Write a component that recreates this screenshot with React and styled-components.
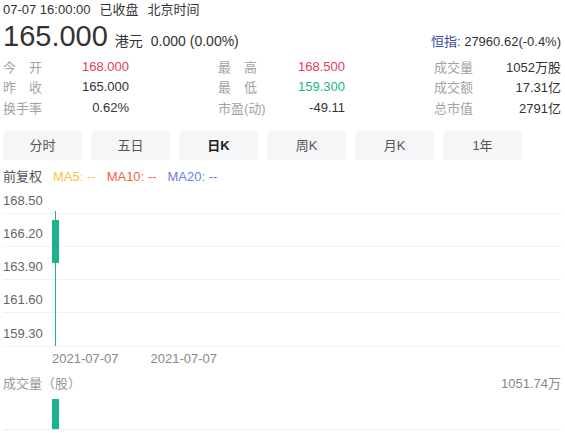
import styled, { createGlobalStyle } from "styled-components";

const GlobalStyle = createGlobalStyle`
  html, body {
    margin: 0;
    padding: 0;
    background: #fff;
  }
  body {
    font-family: "Liberation Sans", "Noto Sans CJK SC", sans-serif;
    color: #333;
  }
`;

const stats = [
  [
    { label: "今开", value: "168.000", tone: "up" },
    { label: "最高", value: "168.500", tone: "up" },
    { label: "成交量", value: "1052万股" },
  ],
  [
    { label: "昨收", value: "165.000" },
    { label: "最低", value: "159.300", tone: "down" },
    { label: "成交额", value: "17.31亿" },
  ],
  [
    { label: "换手率", value: "0.62%" },
    { label: "市盈(动)", value: "-49.11" },
    { label: "总市值", value: "2791亿" },
  ],
];

const tabs = ["分时", "五日", "日K", "周K", "月K", "1年"];
const priceLabels = ["168.50", "166.20", "163.90", "161.60", "159.30"];

const toneColor = { up: "#e5404f", down: "#1bb38a" };

function App() {
  return (
    <Page>
      <GlobalStyle />
      <TopLine>
        <span>07-07 16:00:00</span>
        <span>已收盘</span>
        <span>北京时间</span>
      </TopLine>
      <PriceRow>
        <Price>165.000</Price>
        <Currency>港元</Currency>
        <Change>0.000 (0.00%)</Change>
        <Index>
          <b>恒指:</b> 27960.62(-0.4%)
        </Index>
      </PriceRow>

      <StatsGrid>
        {stats.map((row, r) =>
          row.map((cell, c) => (
            <StatCell key={`${r}-${c}`}>
              <StatLabel $justify={cell.label.length === 2}>{cell.label}</StatLabel>
              <StatValue $tone={cell.tone}>{cell.value}</StatValue>
            </StatCell>
          ))
        )}
      </StatsGrid>

      <Tabs>
        {tabs.map((t) => (
          <Tab key={t} $active={t === "日K"}>
            {t}
          </Tab>
        ))}
      </Tabs>

      <Legend>
        <span>前复权</span>
        <Ma $color="#f7c43f">MA5: --</Ma>
        <Ma $color="#f0653d">MA10: --</Ma>
        <Ma $color="#6c7fe0">MA20: --</Ma>
      </Legend>

      <Plot>
        {priceLabels.map((p, i) => (
          <GridRow key={p} $first={i === 0}>
            <AxisLabel>{p}</AxisLabel>
          </GridRow>
        ))}
        <Candle width="20" height="160" viewBox="0 0 20 160">
          <rect x="5" y="24" width="1" height="135" fill="#1bb38a" />
          <rect x="2" y="33" width="7" height="43" fill="#1bb38a" />
        </Candle>
      </Plot>

      <DateAxis>
        <span>2021-07-07</span>
        <span>2021-07-07</span>
      </DateAxis>

      <VolumeHeader>
        <span>成交量（股）</span>
        <span>1051.74万</span>
      </VolumeHeader>
      <VolumePlot>
        <VolumeBar style={{ height: 30 }} />
      </VolumePlot>
    </Page>
  );
}

export default App;

const Page = styled.div`
  width: 565px;
  box-sizing: border-box;
  padding: 0 4px 0 3px;
  font-size: 13px;
`;

const TopLine = styled.div`
  display: flex;
  gap: 9px;
  height: 20px;
  line-height: 20px;
  color: #333;
`;

const PriceRow = styled.div`
  display: flex;
  align-items: baseline;
  height: 32px;
  margin-bottom: 4px;
`;

const Price = styled.span`
  font-size: 29px;
  line-height: 32px;
  color: #333;
  margin-right: 7px;
`;

const Currency = styled.span`
  font-size: 14px;
  color: #333;
  margin-right: 8px;
`;

const Change = styled.span`
  font-size: 14px;
  color: #333;
`;

const Index = styled.span`
  margin-left: auto;
  font-size: 13px;
  color: #333;
  b {
    font-weight: normal;
    color: #3a47a0;
  }
`;

const StatsGrid = styled.div`
  display: grid;
  grid-template-columns: 126px 127px 127px;
  grid-auto-rows: 20.5px;
  column-gap: 89px;
`;

const StatCell = styled.div`
  display: flex;
  align-items: center;
  justify-content: space-between;
`;

const StatLabel = styled.span`
  width: ${(p) => (p.$justify ? "39px" : "auto")};
  text-align: justify;
  text-align-last: ${(p) => (p.$justify ? "justify" : "auto")};
  color: #a3a3a3;
  white-space: nowrap;
`;

const StatValue = styled.span`
  color: ${(p) => toneColor[p.$tone] || "#333"};
  white-space: nowrap;
`;

const Tabs = styled.div`
  display: flex;
  gap: 9px;
  margin-top: 13px;
`;

const Tab = styled.div`
  width: 79px;
  height: 29px;
  line-height: 29px;
  text-align: center;
  background: #f5f6f8;
  border-radius: 4px;
  color: ${(p) => (p.$active ? "#222" : "#555")};
  font-weight: ${(p) => (p.$active ? "bold" : "normal")};
`;

const Legend = styled.div`
  display: flex;
  gap: 11px;
  height: 20px;
  line-height: 20px;
  margin-top: 7px;
  color: #555;
`;

const Ma = styled.span`
  color: ${(p) => p.$color};
`;

const Plot = styled.div`
  position: relative;
`;

const GridRow = styled.div`
  box-sizing: border-box;
  height: ${(p) => (p.$first ? "27px" : "33.25px")};
  border-bottom: 1px solid #f1f1f1;
  display: flex;
  align-items: flex-end;
  padding-bottom: 4px;
`;

const AxisLabel = styled.span`
  line-height: 16px;
  color: #666;
`;

const Candle = styled.svg`
  position: absolute;
  left: 47px;
  top: 0;
`;

const DateAxis = styled.div`
  display: flex;
  gap: 32px;
  padding-left: 49px;
  height: 24px;
  line-height: 24px;
  color: #888;
`;

const VolumeHeader = styled.div`
  display: flex;
  justify-content: space-between;
  height: 22px;
  line-height: 22px;
  margin-top: 2px;
  color: #999;
  span:last-child {
    color: #888;
  }
`;

const VolumePlot = styled.div`
  display: flex;
  align-items: flex-end;
  height: 34px;
  padding-left: 49px;
  border-bottom: 1px solid #eee;
`;

const VolumeBar = styled.div`
  width: 7px;
  background: #1bb38a;
`;
